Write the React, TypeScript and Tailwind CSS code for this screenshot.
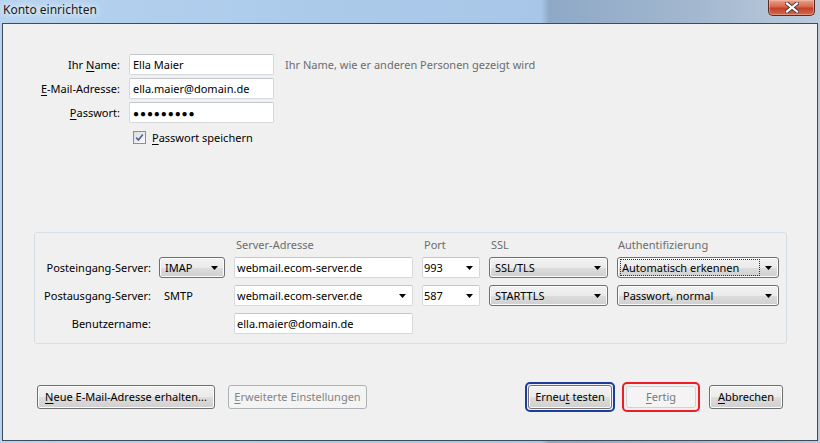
import React from "react";

const font = "font-['Segoe_UI','Noto_Sans',sans-serif] text-[11px] leading-[16px] whitespace-nowrap";

const btn =
  "flex items-center justify-center rounded-[3px] border border-[#707070] bg-[linear-gradient(#f2f2f2_0%,#ebebeb_50%,#dddddd_51%,#cfcfcf_100%)] shadow-[inset_0_0_0_1px_#fbfbfb] text-black";

const field = "rounded-[2px] border border-[#d5d9de] border-t-[#c3c7cc] bg-white";

const Arrow = () => (
  <svg width="7" height="4" viewBox="0 0 7 4" className="shrink-0">
    <path d="M0 0h7L3.5 4z" fill="#000" />
  </svg>
);

// Buchstabe mit Unterstrich (Tastenkürzel)
const U = ({ children }: { children: React.ReactNode }) => <span className="underline underline-offset-2">{children}</span>;

const TextInput = ({ value, w, pl = "pl-[5px]" }: { value: string; w: string; pl?: string }) => (
  <div className={`${field} ${w} h-[21px] flex items-center ${pl}`}>{value}</div>
);

const Combo = ({ value, w, pl = "pl-[1px]" }: { value: string; w: string; pl?: string }) => (
  <div className={`${field} ${w} h-[21px] flex items-center justify-between ${pl} pr-[6px]`}>
    <span>{value}</span>
    <Arrow />
  </div>
);

const Select = ({ value, w, focus }: { value: string; w: string; focus?: boolean }) => (
  <div className={`${btn} ${w} h-[21px] !justify-between pl-[4px] pr-[6px]`}>
    <span className={focus ? "outline outline-1 outline-dotted outline-[#333] px-[1px] pr-[20px] -ml-[1px] leading-[15px]" : "pl-[1px]"}>{value}</span>
    <Arrow />
  </div>
);

const CloseButton = () => (
  <div className="w-[47px] h-[16px] rounded-b-[5px] border border-t-0 border-[#5b2a22] bg-[linear-gradient(#e9a38f_0%,#d7664c_45%,#c4402a_55%,#d46a50_100%)] shadow-[inset_0_0_0_1px_rgba(255,200,180,0.45)] flex items-center justify-center">
    <svg width="14" height="11" viewBox="0 0 14 11">
      <path d="M2 1.5L12 9.5M12 1.5L2 9.5" stroke="#4a3a36" strokeWidth="4" strokeLinecap="square" />
      <path d="M2 1.5L12 9.5M12 1.5L2 9.5" stroke="#fff" strokeWidth="2.2" strokeLinecap="square" />
    </svg>
  </div>
);

export default function App() {
  return (
    <div
      className={`${font} w-[820px] h-[443px] overflow-hidden flex flex-col bg-[linear-gradient(to_right,#b6d3ef_0%,#abcaea_40%,#a8c7e8_66%,#8ea8c6_67%,#a3b8cf_85%,#bccbdc_100%)]`}
    >
      {/* Titelleiste */}
      <div className="h-[23px] flex items-start justify-between pl-[3px] pr-[5px]">
        <span className="text-[12px] leading-[20px] text-[#1a1a1a] [text-shadow:0_0_6px_#ffffff,0_0_10px_#ffffff]">Konto einrichten</span>
        <CloseButton />
      </div>

      {/* Dialoginhalt */}
      <div className="ml-[2px] mr-[2px] h-[418px] border border-[#3f4b57] bg-[#f0f0f0] flex flex-col">
        <div className="pt-[30px] flex flex-col gap-[3px]">
          <div className="flex items-center h-[21px]">
            <div className="w-[117px] text-right">
              Ihr <U>N</U>ame:
            </div>
            <div className="ml-[9px]">
              <TextInput value="Ella Maier" w="w-[145px]" pl="pl-[3px]" />
            </div>
            <span className="ml-[11px] text-[#6d6d6d]">Ihr Name, wie er anderen Personen gezeigt wird</span>
          </div>
          <div className="flex items-center h-[21px]">
            <div className="w-[117px] text-right">
              <U>E</U>-Mail-Adresse:
            </div>
            <div className="ml-[9px]">
              <TextInput value="ella.maier@domain.de" w="w-[145px]" pl="pl-[3px]" />
            </div>
          </div>
          <div className="flex items-center h-[21px]">
            <div className="w-[117px] text-right">
              <U>P</U>asswort:
            </div>
            <div className="ml-[9px]">
              <div className={`${field} w-[145px] h-[21px] flex items-center pl-[3px] text-[10px] tracking-[0.9px]`}>●●●●●●●●●</div>
            </div>
          </div>
        </div>

        <div className="mt-[8px] ml-[130px] flex items-center gap-[6px] h-[13px]">
          <div className="w-[13px] h-[13px] border border-[#8e8f8f] bg-[linear-gradient(135deg,#dcdcdc,#fbfbfb)] flex items-center justify-center">
            <svg width="9" height="9" viewBox="0 0 9 9">
              <path d="M1.2 4.6L3.4 7L7.8 1.4" fill="none" stroke="#4c61a0" strokeWidth="1.6" />
            </svg>
          </div>
          <span>
            <U>P</U>asswort speichern
          </span>
        </div>

        {/* Server-Einstellungen */}
        <div className="mt-[88px] ml-[31px] w-[753px] h-[112px] border border-[#d5dfe5] rounded-[3px] flex flex-col">
          <div className="mt-[4px] h-[16px] flex text-[#6d6d6d]">
            <div className="w-[199px]" />
            <div className="w-[188px] pl-[2px]">Server-Adresse</div>
            <div className="w-[67px] pl-[2px]">Port</div>
            <div className="w-[128px] pl-[2px]">SSL</div>
            <div className="pl-[1px]">Authentifizierung</div>
          </div>
          <div className="mt-[4px] flex flex-col gap-[7px]">
            <div className="flex items-center h-[21px]">
              <div className="w-[116px] text-right">Posteingang-Server:</div>
              <div className="ml-[8px]">
                <Select value="IMAP" w="w-[66px]" />
              </div>
              <div className="ml-[9px]">
                <TextInput value="webmail.ecom-server.de" w="w-[179px]" pl="pl-[2px]" />
              </div>
              <div className="ml-[9px]">
                <Combo value="993" w="w-[58px]" />
              </div>
              <div className="ml-[9px]">
                <Select value="SSL/TLS" w="w-[119px]" />
              </div>
              <div className="ml-[9px]">
                <Select value="Automatisch erkennen" w="w-[162px]" focus />
              </div>
            </div>
            <div className="flex items-center h-[21px]">
              <div className="w-[116px] text-right">Postausgang-Server:</div>
              <div className="ml-[13px] w-[70px]">SMTP</div>
              <div>
                <Combo value="webmail.ecom-server.de" w="w-[179px]" pl="pl-[2px]" />
              </div>
              <div className="ml-[9px]">
                <Combo value="587" w="w-[58px]" />
              </div>
              <div className="ml-[9px]">
                <Select value="STARTTLS" w="w-[119px]" />
              </div>
              <div className="ml-[9px]">
                <Select value="Passwort, normal" w="w-[162px]" />
              </div>
            </div>
            <div className="flex items-center h-[21px]">
              <div className="w-[116px] text-right">Benutzername:</div>
              <div className="ml-[83px]">
                <TextInput value="ella.maier@domain.de" w="w-[179px]" pl="pl-[2px]" />
              </div>
            </div>
          </div>
        </div>

        {/* Schaltflächen */}
        <div className="mt-[41px] flex items-center h-[24px]">
          <div className="ml-[34px] flex gap-[13px]">
            <div className={`${btn} w-[178px] h-[24px]`}>
              <span>
                <U>N</U>eue E-Mail-Adresse erhalten...
              </span>
            </div>
            <div className="w-[139px] h-[24px] rounded-[3px] border border-[#adb2b5] bg-[#f4f4f4] text-[#838383] flex items-center justify-center">
              <span>
                <U>E</U>rweiterte Einstellungen
              </span>
            </div>
          </div>
          <div className="ml-auto mr-[34px] flex items-center">
            <div className="p-[1px] rounded-[5px] border-2 border-[#1d3d9c]">
              <div className={`${btn} w-[84px] h-[24px]`}>
                <span>
                  Erneu<U>t</U> testen
                </span>
              </div>
            </div>
            <div className="ml-[7px] p-[2px] rounded-[5px] border-2 border-[#ee1c24]">
              <div className="w-[70px] h-[22px] rounded-[3px] border border-[#d0d3d6] bg-[#f4f4f4] text-[#7a7a7a] flex items-center justify-center">
                <span>
                  <U>F</U>ertig
                </span>
              </div>
            </div>
            <div className={`${btn} ml-[9px] w-[74px] h-[24px]`}>
              <span>
                <U>A</U>bbrechen
              </span>
            </div>
          </div>
        </div>
      </div>
    </div>
  );
}
